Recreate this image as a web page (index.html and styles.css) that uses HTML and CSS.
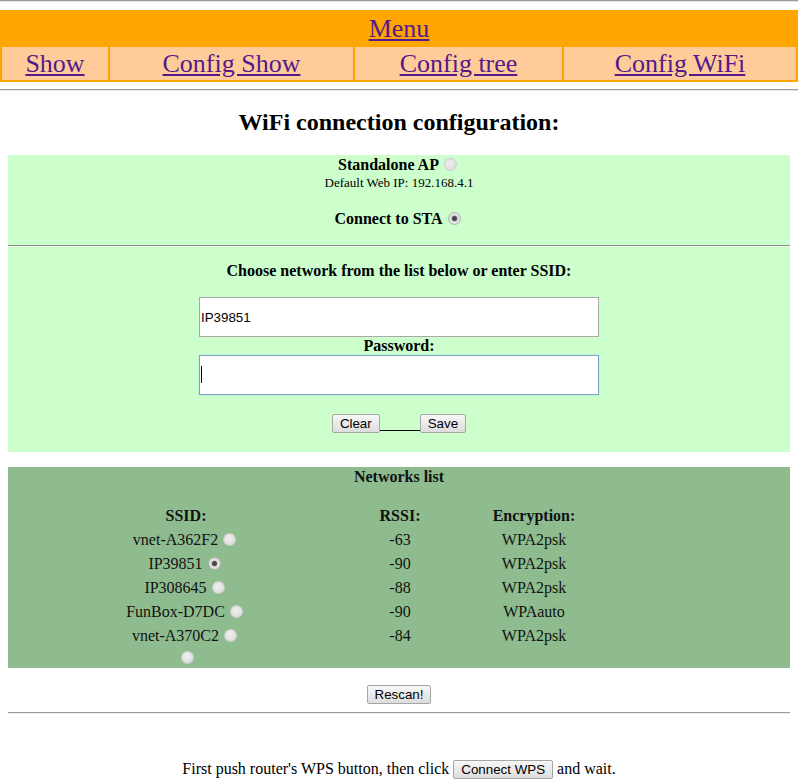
FILE: index.html
```html
<!DOCTYPE html>
<html>
<head>
<meta charset="utf-8">
<title>WiFi configuration</title>
<link rel="stylesheet" href="styles.css">
</head>
<body>
<hr class="rule rule-top">
<table class="menu">
  <tr><td colspan="4" class="menu-title"><a href="#">Menu</a></td></tr>
  <tr class="menu-items">
    <td class="c1"><a href="#">Show</a></td>
    <td class="c2"><a href="#">Config Show</a></td>
    <td class="c3"><a href="#">Config tree</a></td>
    <td class="c4"><a href="#">Config WiFi</a></td>
  </tr>
</table>
<hr class="rule rule-mid">
<h2 class="title">WiFi connection configuration:</h2>

<div class="panel config">
  <div class="mode"><b>Standalone AP</b><input type="radio" name="mode" class="radio"></div>
  <div class="hint">Default Web IP: 192.168.4.1</div>
  <div class="mode sta"><b>Connect to STA</b><input type="radio" name="mode" class="radio" checked></div>
  <hr class="panel-rule">
  <div class="label choose">Choose network from the list below or enter SSID:</div>
  <input type="text" class="field" value="IP39851">
  <div class="label">Password:</div>
  <span class="field-wrap"><input type="password" class="field focused"><span class="caret"></span></span>
  <div class="actions">
    <button class="btn">Clear</button><span class="gap"></span><button class="btn">Save</button>
  </div>
</div>

<div class="panel networks">
  <div class="net-title">Networks list</div>
  <table class="net-table">
    <colgroup><col class="w1"><col class="w2"><col class="w3"><col></colgroup>
    <tr class="head"><th>SSID:</th><th>RSSI:</th><th>Encryption:</th><th></th></tr>
    <tr><td>vnet-A362F2<input type="radio" name="net" class="radio"></td><td>-63</td><td>WPA2psk</td><td></td></tr>
    <tr><td>IP39851<input type="radio" name="net" class="radio" checked></td><td>-90</td><td>WPA2psk</td><td></td></tr>
    <tr><td>IP308645<input type="radio" name="net" class="radio"></td><td>-88</td><td>WPA2psk</td><td></td></tr>
    <tr><td>FunBox-D7DC<input type="radio" name="net" class="radio"></td><td>-90</td><td>WPAauto</td><td></td></tr>
    <tr><td>vnet-A370C2<input type="radio" name="net" class="radio"></td><td>-84</td><td>WPA2psk</td><td></td></tr>
    <tr class="last"><td><input type="radio" name="net" class="radio"></td><td></td><td></td><td></td></tr>
  </table>
</div>

<div class="rescan"><button class="btn">Rescan!</button></div>
<hr class="rule rule-bottom">
<p class="wps">First push router's WPS button, then click <button class="btn">Connect WPS</button> and wait.</p>
</body>
</html>
```
FILE: styles.css
```css
html, body {
  margin: 0;
  padding: 0;
  background: #fff;
}
body {
  font-family: "Liberation Serif", "Times New Roman", serif;
  font-size: 16px;
  color: #000;
}
.rule {
  height: 0;
  border: 0;
  border-top: 1px solid #9a9a9a;
  border-bottom: 1px solid #e4e4e4;
}
.rule-top { margin: 0 0 8px; }
.rule-mid { margin: 7px 0 0; border-top-color: #a29aaa; }
.rule-bottom { margin: 8px 8px 0; border-top-color: #999; border-bottom-color: #eee; }

.menu {
  width: 100%;
  background: #ffa500;
  border-spacing: 2px;
  font-size: 26px;
  text-align: center;
}
.menu td {
  padding: 1px;
  line-height: 31px;
}
.menu a { color: #551a8b; }
.menu-items td { background: #ffcc99; }
.menu .c1 { width: 104px; }
.menu .c2 { width: 241px; }
.menu .c3 { width: 205px; }

.title {
  font-size: 24px;
  line-height: 28px;
  text-align: center;
  margin: 17px 0 19px;
}

.panel {
  margin: 0 8px;
  text-align: center;
}
.config {
  background: #ccffcc;
  padding-bottom: 19px;
}
.mode {
  line-height: 20px;
}
.hint {
  font-size: 13px;
  line-height: 16px;
}
.sta { margin-top: 18px; }
.panel-rule {
  margin: 16px 0 0;
  height: 0;
  border: 0;
  border-top: 1px solid #8c8c8c;
  border-bottom: 1px solid #e6ffe6;
}
.label {
  font-weight: bold;
  line-height: 18px;
}
.choose {
  line-height: 20px;
  margin: 14px 0 16px;
}
.field {
  display: block;
  box-sizing: border-box;
  width: 400px;
  height: 40px;
  margin: 0 auto;
  padding: 0 1px;
  border: 1px solid #a9a9a9;
  background: #fff;
  font-family: "Liberation Sans", Arial, sans-serif;
  font-size: 13.33px;
  color: #000;
  outline: none;
}
.field.focused {
  border-color: #7da2ce;
  box-shadow: 0 0 1px #9cc0ea;
}
.field-wrap {
  display: block;
  position: relative;
  width: 400px;
  margin: 0 auto;
}
.caret {
  position: absolute;
  left: 2px;
  top: 11px;
  width: 1px;
  height: 17px;
  background: #000;
}
.actions {
  margin-top: 18px;
  line-height: 20px;
}
.gap {
  display: inline-block;
  width: 40px;
  height: 0;
  border-bottom: 1px solid #000;
  vertical-align: baseline;
  margin-bottom: -3px;
}
.btn {
  font-family: "Liberation Sans", Arial, sans-serif;
  font-size: 13.33px;
  line-height: 15px;
  padding: 1px 7px;
  border: 1px solid #a6a6a6;
  border-radius: 2px;
  background: linear-gradient(#f7f7f7, #dddddd);
  color: #000;
  margin: 0;
  vertical-align: baseline;
}

.radio {
  appearance: none;
  -webkit-appearance: none;
  width: 13px;
  height: 13px;
  margin: 0 3px 0 5px;
  border-radius: 50%;
  border: 1px solid #cfcfcf;
  box-sizing: border-box;
  background: radial-gradient(circle at 45% 40%, #f0f0f0 0, #dadada 85%);
  vertical-align: -1px;
}
.radio:checked {
  border-color: #b0b0b0;
  background: radial-gradient(circle, #3c3c3c 0, #555 2.2px, #dcdcdc 3.2px, #ececec 100%);
}

.networks {
  background: #8fbc8f;
  color: #111;
  margin-top: 15px;
}
.net-title {
  font-weight: bold;
  line-height: 20px;
}
.net-table {
  width: 100%;
  table-layout: fixed;
  border-spacing: 0;
  margin-top: 17px;
}
.net-table .w1 { width: 356px; }
.net-table .w2 { width: 72px; }
.net-table .w3 { width: 196px; }
.net-table th, .net-table td {
  padding: 0;
  height: 24px;
  text-align: center;
  vertical-align: middle;
}
.net-table .last td { height: 20px; }

.rescan {
  text-align: center;
  margin-top: 16px;
  line-height: 20px;
}
.wps {
  text-align: center;
  margin: 44px 0 0;
  line-height: 22px;
}
```
